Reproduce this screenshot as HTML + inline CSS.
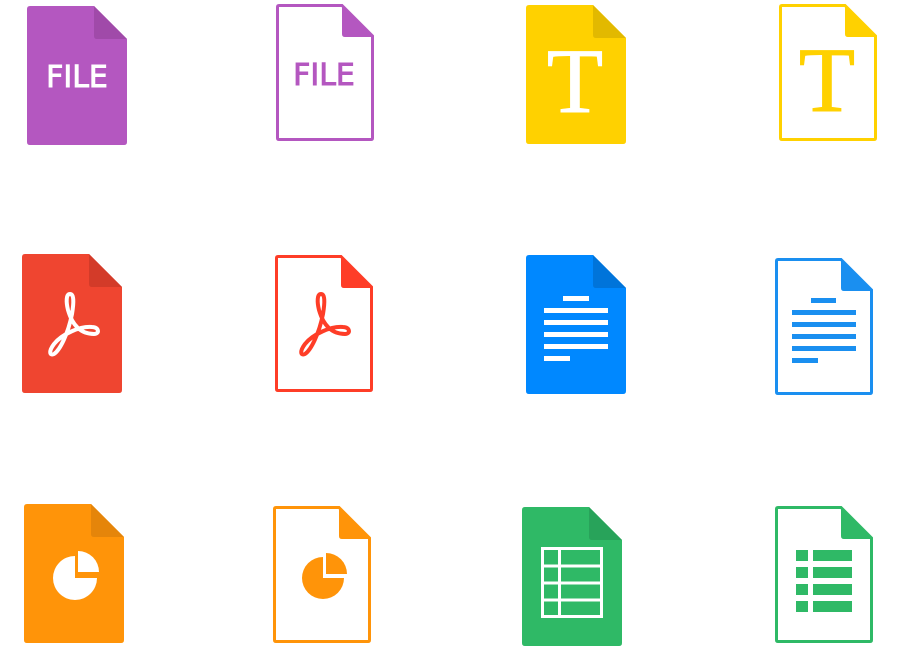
<!DOCTYPE html>
<html><head><meta charset="utf-8"><style>
html,body{margin:0;padding:0;background:#fff;width:897px;height:648px;overflow:hidden;position:relative}
svg{position:absolute;overflow:visible}
</style></head><body>

<svg style="left:27px;top:6px" width="100" height="139" viewBox="0 0 100 139">
<path d="M3 0H67L100 33V136Q100 139 97 139H3Q0 139 0 136V3Q0 0 3 0Z" fill="#b457c0"/>
<path d="M67 0V30Q67 33 70 33H100Z" fill="#a04aa9"/>
<text x="50" y="81" text-anchor="middle" font-family="DejaVu Sans, Liberation Sans, sans-serif" font-size="30" fill="#fff" stroke="#fff" stroke-width="0.9">FILE</text>
</svg>

<svg style="left:276px;top:4px" width="98" height="137" viewBox="0 0 98 137">
<path d="M3 1.5H66L96.5 32V134Q96.5 135.5 95 135.5H3Q1.5 135.5 1.5 134V3Q1.5 1.5 3 1.5Z" fill="none" stroke="#b457c0" stroke-width="3"/>
<path d="M66 0V30Q66 33 69 33H98Z" fill="#b457c0"/>
<text x="48" y="81" text-anchor="middle" font-family="DejaVu Sans, Liberation Sans, sans-serif" font-size="30" fill="#b457c0" stroke="#b457c0" stroke-width="0.9">FILE</text>
</svg>

<svg style="left:526px;top:5px" width="100" height="139" viewBox="0 0 100 139">
<path d="M3 0H67L100 33V136Q100 139 97 139H3Q0 139 0 136V3Q0 0 3 0Z" fill="#ffd100"/>
<path d="M67 0V30Q67 33 70 33H100Z" fill="#e2b900"/>
<text x="49" y="107" text-anchor="middle" font-family="Liberation Serif, serif" font-size="92" fill="#fff" stroke="#fff" stroke-width="1">T</text>
</svg>

<svg style="left:779px;top:4px" width="98" height="137" viewBox="0 0 98 137">
<path d="M3 1.5H66L96.5 32V134Q96.5 135.5 95 135.5H3Q1.5 135.5 1.5 134V3Q1.5 1.5 3 1.5Z" fill="none" stroke="#ffd100" stroke-width="3"/>
<path d="M66 0V30Q66 33 69 33H98Z" fill="#ffd100"/>
<text x="48" y="107" text-anchor="middle" font-family="Liberation Serif, serif" font-size="92" fill="#ffd100" stroke="#ffd100" stroke-width="1">T</text>
</svg>

<svg style="left:22px;top:254px" width="100" height="139" viewBox="0 0 100 139">
<path d="M3 0H67L100 33V136Q100 139 97 139H3Q0 139 0 136V3Q0 0 3 0Z" fill="#ef4530"/>
<path d="M67 0V30Q67 33 70 33H100Z" fill="#d33b29"/>
<path d="M48 40C44 40 44 48 46 56C50 70 58 80 72 80C78 80 77 73 70 73C58 72 40 80 32 90C26 98 28 102 32 100C38 96 46 80 50 60C52 48 52 40 48 40Z" fill="none" stroke="#fff" stroke-width="4" stroke-linejoin="round"/>
</svg>

<svg style="left:275px;top:255px" width="98" height="137" viewBox="0 0 98 137">
<path d="M3 1.5H66L96.5 32V134Q96.5 135.5 95 135.5H3Q1.5 135.5 1.5 134V3Q1.5 1.5 3 1.5Z" fill="none" stroke="#fe3d27" stroke-width="3"/>
<path d="M66 0V30Q66 33 69 33H98Z" fill="#fe3d27"/>
<path d="M46 39C42 39 42 47 44 55C48 69 56 79 70 79C76 79 75 72 68 72C56 71 38 79 30 89C24 97 26 101 30 99C36 95 44 79 48 59C50 47 50 39 46 39Z" fill="none" stroke="#fe3d27" stroke-width="4" stroke-linejoin="round"/>
</svg>

<svg style="left:526px;top:255px" width="100" height="139" viewBox="0 0 100 139">
<path d="M3 0H67L100 33V136Q100 139 97 139H3Q0 139 0 136V3Q0 0 3 0Z" fill="#0088ff"/>
<path d="M67 0V30Q67 33 70 33H100Z" fill="#0074da"/>
<g fill="#fff"><rect x="37" y="41" width="26" height="5"/><rect x="18" y="53" width="64" height="5"/><rect x="18" y="65" width="64" height="5"/><rect x="18" y="77" width="64" height="5"/><rect x="18" y="89" width="64" height="5"/><rect x="18" y="101" width="26" height="5"/></g>
</svg>

<svg style="left:775px;top:258px" width="98" height="137" viewBox="0 0 98 137">
<path d="M3 1.5H66L96.5 32V134Q96.5 135.5 95 135.5H3Q1.5 135.5 1.5 134V3Q1.5 1.5 3 1.5Z" fill="none" stroke="#1a8ff0" stroke-width="3"/>
<path d="M66 0V30Q66 33 69 33H98Z" fill="#1a8ff0"/>
<g fill="#1a8ff0"><rect x="36" y="40" width="25" height="5"/><rect x="17" y="52" width="64" height="5"/><rect x="17" y="64" width="64" height="5"/><rect x="17" y="76" width="64" height="5"/><rect x="17" y="88" width="64" height="5"/><rect x="17" y="100" width="26" height="5"/></g>
</svg>

<svg style="left:24px;top:504px" width="100" height="139" viewBox="0 0 100 139">
<path d="M3 0H67L100 33V136Q100 139 97 139H3Q0 139 0 136V3Q0 0 3 0Z" fill="#ff9409"/>
<path d="M67 0V30Q67 33 70 33H100Z" fill="#e5850a"/>
<path d="M51 52A22 22 0 1 0 73 74H51Z" fill="#fff"/>
<path d="M54 47A21 21 0 0 1 75 68H54Z" fill="#fff"/>
</svg>

<svg style="left:273px;top:506px" width="98" height="137" viewBox="0 0 98 137">
<path d="M3 1.5H66L96.5 32V134Q96.5 135.5 95 135.5H3Q1.5 135.5 1.5 134V3Q1.5 1.5 3 1.5Z" fill="none" stroke="#ff9409" stroke-width="3"/>
<path d="M66 0V30Q66 33 69 33H98Z" fill="#ff9409"/>
<path d="M50 51A21 21 0 1 0 71 72H50Z" fill="#ff9409"/>
<path d="M53 47A21 21 0 0 1 74 68H53Z" fill="#ff9409"/>
</svg>

<svg style="left:522px;top:507px" width="100" height="139" viewBox="0 0 100 139">
<path d="M3 0H67L100 33V136Q100 139 97 139H3Q0 139 0 136V3Q0 0 3 0Z" fill="#2fb966"/>
<path d="M67 0V30Q67 33 70 33H100Z" fill="#28a35a"/>
<g fill="none" stroke="#fff" stroke-width="3"><rect x="20.5" y="41.5" width="59" height="68"/><line x1="37.5" y1="41" x2="37.5" y2="110"/><line x1="20" y1="59" x2="80" y2="59"/><line x1="20" y1="76" x2="80" y2="76"/><line x1="20" y1="93" x2="80" y2="93"/></g>
</svg>

<svg style="left:775px;top:506px" width="98" height="137" viewBox="0 0 98 137">
<path d="M3 1.5H66L96.5 32V134Q96.5 135.5 95 135.5H3Q1.5 135.5 1.5 134V3Q1.5 1.5 3 1.5Z" fill="none" stroke="#2fb966" stroke-width="3"/>
<path d="M66 0V30Q66 33 69 33H98Z" fill="#2fb966"/>
<g fill="#2fb966"><rect x="21" y="44" width="12" height="11"/><rect x="38" y="44" width="39" height="11"/><rect x="21" y="61" width="12" height="11"/><rect x="38" y="61" width="39" height="11"/><rect x="21" y="78" width="12" height="11"/><rect x="38" y="78" width="39" height="11"/><rect x="21" y="95" width="12" height="11"/><rect x="38" y="95" width="39" height="11"/></g>
</svg>

</body></html>
